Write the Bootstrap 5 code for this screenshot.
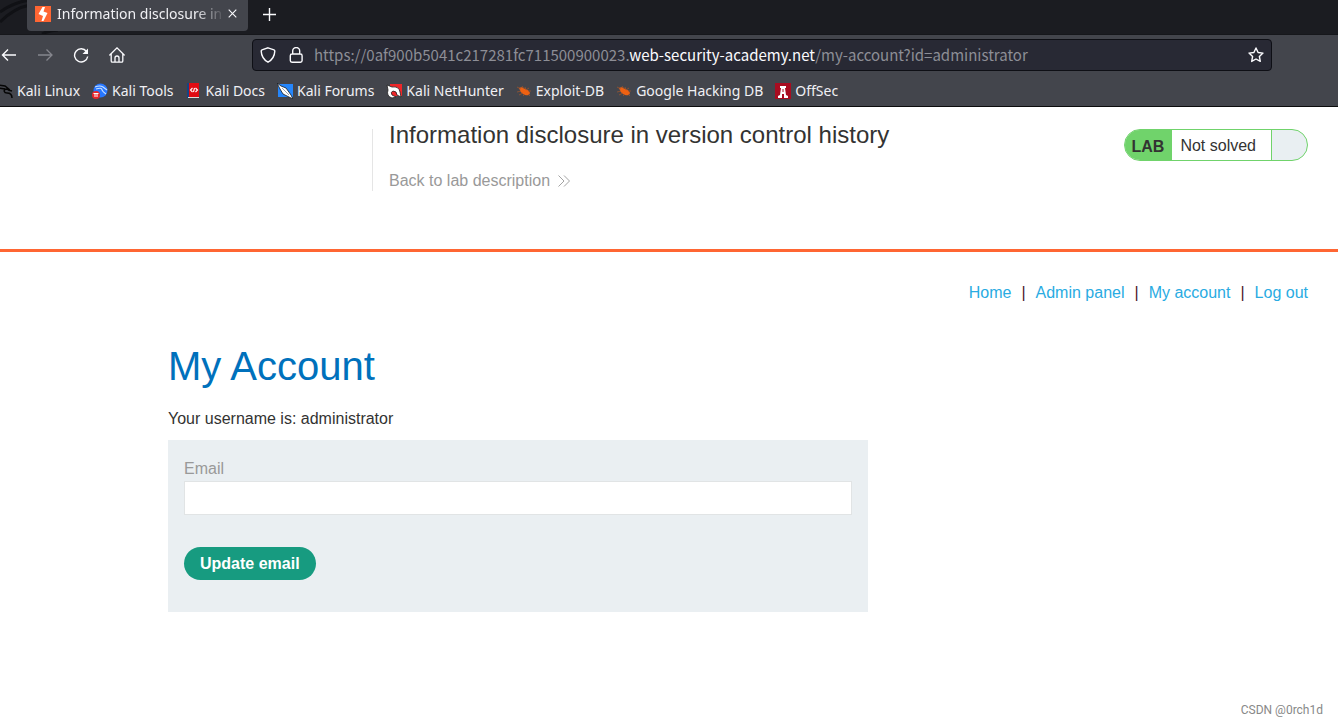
<!DOCTYPE html>
<html lang="en">
<head>
<meta charset="utf-8">
<meta name="viewport" content="width=device-width, initial-scale=1">
<title>Information disclosure in version control history</title>
<link href="https://cdn.jsdelivr.net/npm/bootstrap@5.3.0/dist/css/bootstrap.min.css" rel="stylesheet">
<style>
body{font:16px/20px "Liberation Sans",Arial,sans-serif;color:#333332;background:#fff;min-height:100vh}
svg{display:block;flex:none}
a{text-decoration:none}
.chrome{font:14px/20px "Noto Sans",sans-serif;background:#43454c;color:#f0f0f4;border-bottom:1px solid #0c0c0d}
.tabstrip{height:35px;background:#1b1c21;border-bottom:1px solid #16171b;padding-left:27px;overflow:hidden}
.swirl{left:0;top:0}
.tab{width:221px;height:31px;background:#43454c;border-radius:0 0 4px 4px;padding:0 11px 4px 8px}
.tab-title{width:168px;margin-left:6px;white-space:nowrap;-webkit-mask-image:linear-gradient(90deg,#000 82%,transparent 100%);mask-image:linear-gradient(90deg,#000 82%,transparent 100%)}
.bare{background:none;border:0;padding:0;color:inherit}
.new-tab{margin:0 0 6px 15px}
.toolbar{padding:4px 66px 4px 0}
.tools{width:251px;gap:20px;margin-left:1px}
.address{height:32px;background:#282934;border:1px solid #0e0f15;border-radius:4px;padding:0 7px;color:#8d8e96}
.address b{font-weight:400;color:#fbfbfe}
.url{font:15px/20px "Noto Sans CJK SC","Noto Sans",sans-serif;margin-left:6px;white-space:nowrap;overflow:hidden}
.bookmarks{height:31px;gap:12px;margin-left:-3px;overflow:hidden;white-space:nowrap}
.bookmarks a{color:#f0f0f4;gap:4px}
.lab-head{height:145px;padding:22px 30px 0;border-bottom:3px solid #ff6633}
.brand-space{width:27%;margin-right:-3px}
.lab-title{border-left:1px solid #e5e5e5;height:62px;padding-left:16px}
.lab-title h2{font-size:24px;line-height:28px;margin:-8px 0 22px;font-weight:400}
.lab-title a{color:#999;gap:8px}
.status{height:32px;border:1px solid #70d36b;border-radius:16px;overflow:hidden;background:#e9eff2}
.status strong{background:#70d36b;padding:3px 8px 0 7px}
.status span{background:#fff;border-right:1px solid #70d36b;padding:2px 15px 0 8px}
.status i{width:35px}
.account-nav{padding:31px 30px 0;gap:10px}
.account-nav a{color:#29abe2}
.account-nav span{color:#4a1528}
.content{max-width:1002px}
.content h1{font-size:40px;line-height:48px;color:#0071bc;font-weight:400;margin:39px 0 19px}
.content p{margin-bottom:11px}
.account-form{max-width:700px;background:#eaeff2;padding:19px 16px 32px}
.account-form label{color:#999;margin-bottom:2px}
.account-form .form-control{height:34px;border:1px solid #e1e4e5;border-radius:0;margin-bottom:32px}
.update{background:#179b80;color:#fff;font-weight:700;border:0;border-radius:17px;height:33px;padding:0 16px;line-height:20px}
.credit{font:12px/16px Roboto,"Liberation Sans",sans-serif;color:#888;padding:0 15px 6px}
</style>
</head>
<body class="d-flex flex-column">
<svg width="0" height="0" class="position-absolute" aria-hidden="true">
<symbol id="dragon" viewBox="0 0 16 16"><path d="M2 2l6 1 5 4-4-1M2 5l6 1M9 6c-3 1-2 4 1 4 3 0 5 1 5 5M11 7l4 1" fill="none" stroke="currentColor" stroke-width="1.500"/></symbol>
<symbol id="bug" viewBox="0 0 16 16"><path d="M3 5q3-2 6 1 4 1 5 4l-1 2q-4 1-6-1-3-2-4-6z" fill="#ee6112"/><path d="M1 9l4-1M3 12l4-2M6 3l2 3M9 4l1 3 3-2M9 11l-2 2M12 8l3 0M12 11l2 2M1 4l4 2" fill="none" stroke="#a8572a" stroke-width=".7"/></symbol>
</svg>
<header class="chrome">
<div class="tabstrip d-flex align-items-center position-relative">
<svg class="swirl position-absolute" width="60" height="34" viewBox="0 0 60 34" aria-hidden="true"><path d="M0 12Q14 2 30 0M0 22Q14 8 30 5M42 34Q50 30 58 30" fill="none" stroke="#101115" stroke-width="3"/></svg>
<div class="tab d-flex align-items-center align-self-start position-relative">
<svg width="16" height="16" viewBox="0 0 16 16"><path fill="#ff6633" d="M0 0h16v16H0z"/><path fill="#fff" d="M7.500 1H10L8.500 5.500 12.500 7 8.500 15H6.500L8 10 3.500 8z"/></svg>
<span class="tab-title">Information disclosure in v</span>
<button class="bare ms-auto" aria-label="Close tab"><svg width="9" height="9" viewBox="0 0 9 9"><path d="M.7.7l7.600 7.600M8.300.7L.7 8.300" stroke="#fbfbfe" stroke-width="1.100"/></svg></button>
</div>
<button class="bare new-tab" aria-label="New tab"><svg width="13" height="13" viewBox="0 0 13 13"><path d="M6.500 0v13M0 6.500h13" stroke="#fbfbfe" stroke-width="1.400"/></svg></button>
</div>
<div class="toolbar d-flex align-items-center">
<div class="tools d-flex flex-shrink-0">
<button class="bare" aria-label="Back"><svg width="16" height="16" viewBox="0 0 16 16"><path d="M15 8H1.500M7 2.500L1.500 8 7 13.500" fill="none" stroke="#fbfbfe" stroke-width="1.400"/></svg></button>
<button class="bare" aria-label="Forward" disabled><svg width="16" height="16" viewBox="0 0 16 16"><path d="M1 8h14M9.500 2.500L15 8l-5.500 5.500" fill="none" stroke="#85868d" stroke-width="1.300"/></svg></button>
<button class="bare" aria-label="Reload"><svg width="16" height="16" viewBox="0 0 16 16"><path d="M13.500 4.500A6.600 6.600 0 1 0 14.700 9.500" fill="none" stroke="#fbfbfe" stroke-width="1.400"/><path d="M15 1.500V7H9.500z" fill="#fbfbfe"/></svg></button>
<button class="bare" aria-label="Home"><svg width="16" height="16" viewBox="0 0 16 16"><path d="M.8 8L8 .9 15.200 8M2.200 7v7q0 1.200 1.200 1.200h9.200q1.200 0 1.200-1.200V7M6 15v-4q0-2 2-2t2 2v4" fill="none" stroke="#fbfbfe" stroke-width="1.300" stroke-linecap="round"/></svg></button>
</div>
<div class="address d-flex align-items-center flex-grow-1">
<svg width="16" height="16" viewBox="0 0 16 16"><path d="M8 .8l6 2.100q.8.3.8 1.200Q14.500 11.500 8 15.200 1.500 11.500 1.200 4.100q0-.9.8-1.200z" fill="none" stroke="#fbfbfe" stroke-width="1.400"/></svg>
<svg class="ms-2" width="24" height="16" viewBox="-4 0 24 16"><path d="M4.700 7V4a3.500 3.500 0 0 1 7 0v3M4 7h8.400q1.700 0 1.700 1.700v4.800q0 1.700-1.700 1.700H4q-1.700 0-1.700-1.700V8.700Q2.300 7 4 7z" fill="none" stroke="#fbfbfe" stroke-width="1.400"/></svg>
<div class="url flex-grow-1">https://0af900b5041c217281fc711500900023.<b>web-security-academy.net</b>/my-account?id=administrator</div>
<button class="bare" aria-label="Bookmark this page"><svg width="16" height="16" viewBox="0 0 16 16"><path d="M8 1l2.100 4.500 4.900.6-3.600 3.400.9 4.900L8 12l-4.300 2.400.9-4.900L1 6.100l4.900-.6z" fill="none" stroke="#fbfbfe" stroke-width="1.400" stroke-linejoin="round"/></svg></button>
</div>
</div>
<nav class="bookmarks d-flex align-items-center" aria-label="Bookmarks">
<a href="#" class="d-flex align-items-center"><svg width="16" height="16" color="#050505"><use href="#dragon"/></svg>Kali Linux</a>
<a href="#" class="d-flex align-items-center"><svg width="16" height="16" viewBox="0 0 16 16"><circle cx="8.500" cy="7.500" r="7" fill="#2777ff"/><path d="M3 4q5-2 8 0l4 3M4 6q6-2 6 1 1 2 4 4" fill="none" stroke="#cde3ff" stroke-width="1.100"/><circle cx="4" cy="12" r="4" fill="#e8252a"/><path d="M1.500 10.500h5M3 10.500V14M5 10.500V14" stroke="#fff"/></svg>Kali Tools</a>
<a href="#" class="d-flex align-items-center"><svg width="16" height="16" viewBox="0 0 16 16"><path fill="#154384" d="M1 0h3v15H1z"/><path fill="#e00b13" d="M3 0h10v14H3z"/><path fill="#ddd" d="M2 14h11v1H2z"/><path d="M6.500 5l-2 2 2 2M9.500 5l2 2-2 2M8.500 5l-1 4" fill="none" stroke="#fff" stroke-width="1.100"/></svg>Kali Docs</a>
<a href="#" class="d-flex align-items-center"><svg width="16" height="16" viewBox="0 0 16 16"><path fill="#2586fb" d="M1 1h15v13H1z"/><path d="M0 0l4 3 5 2 5 7 2 4-4-2-6-3-3-5z" fill="#fff" stroke="#15191e" stroke-width=".8"/><path d="M5 5l7 7" stroke="#9aa3ad"/></svg>Kali Forums</a>
<a href="#" class="d-flex align-items-center"><svg width="16" height="16" viewBox="0 0 16 16"><path fill="#ee2629" d="M4 1h12v12H4z"/><path d="M1 2l5 2q7-1 8 5l1 5-4-2q0-4-4-4-3 1-1 4l4 2-4 1q-6-2-4-8z" fill="#fff" stroke="#222" stroke-width=".8"/></svg>Kali NetHunter</a>
<a href="#" class="d-flex align-items-center"><svg width="16" height="16"><use href="#bug"/></svg>Exploit-DB</a>
<a href="#" class="d-flex align-items-center"><svg width="16" height="16"><use href="#bug"/></svg>Google Hacking DB</a>
<a href="#" class="d-flex align-items-center"><svg width="16" height="16" viewBox="0 0 16 16"><path fill="#a80c20" d="M0 0h16v16H0z"/><path d="M5 3h6v2h-1l1 7 2 1v2H9v-4H7v4H3v-2l2-1 1-7H5z" fill="#fff"/><path d="M8 6v3" stroke="#a80c20"/></svg>OffSec</a>
</nav>
</header>
<section class="lab-head d-flex align-items-start">
<div class="brand-space flex-shrink-0"></div>
<div class="lab-title flex-grow-1">
<h2>Information disclosure in version control history</h2>
<a href="#" class="d-inline-flex align-items-center">Back to lab description <svg width="12" height="12" viewBox="0 0 12 12"><path d="M.5.5L6 6 .5 11.500M6 .5L11.500 6 6 11.500" fill="none" stroke="#999" stroke-width=".9"/></svg></a>
</div>
<div class="status d-flex align-items-stretch flex-shrink-0"><strong class="d-flex align-items-center">LAB</strong><span class="d-flex align-items-center">Not solved</span><i></i></div>
</section>
<nav class="account-nav d-flex justify-content-end" aria-label="Account">
<a href="#">Home</a><span>|</span><a href="#">Admin panel</a><span>|</span><a href="#">My account</a><span>|</span><a href="#">Log out</a>
</nav>
<main class="content w-100 mx-auto">
<h1>My Account</h1>
<p>Your username is: administrator</p>
<form class="account-form">
<label for="email" class="d-block">Email</label>
<input id="email" type="email" class="form-control">
<button type="button" class="update">Update email</button>
</form>
</main>
<footer class="credit mt-auto text-end">CSDN @0rch1d</footer>
<script src="https://cdn.jsdelivr.net/npm/bootstrap@5.3.0/dist/js/bootstrap.bundle.min.js"></script>
</body>
</html>
